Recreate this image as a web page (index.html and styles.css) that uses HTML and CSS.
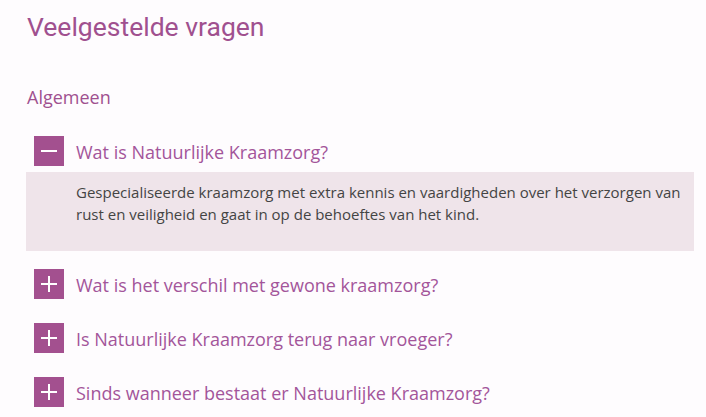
FILE: index.html
```html
<!DOCTYPE html>
<html lang="nl">
<head>
    <meta charset="UTF-8">
    <meta name="viewport" content="width=device-width, initial-scale=1.0">
    <title>Veelgestelde vragen</title>
    <link rel="stylesheet" href="styles.css">
</head>
<body>

<h1 class="page-title">Veelgestelde vragen</h1>

<h3 class="faq-group">Algemeen</h3>

<div class="faq">
    <div class="faq-item open">
        <div class="faq-question">
            <span class="toggle"><span class="bar bar-h"></span></span>
            <span class="question-text">Wat is Natuurlijke Kraamzorg?</span>
        </div>
        <div class="faq-answer">
            <p>Gespecialiseerde kraamzorg met extra kennis en vaardigheden over het verzorgen van rust en veiligheid en gaat in op de behoeftes van het kind.</p>
        </div>
    </div>

    <div class="faq-item">
        <div class="faq-question">
            <span class="toggle"><span class="bar bar-h"></span><span class="bar bar-v"></span></span>
            <span class="question-text">Wat is het verschil met gewone kraamzorg?</span>
        </div>
    </div>

    <div class="faq-item">
        <div class="faq-question">
            <span class="toggle"><span class="bar bar-h"></span><span class="bar bar-v"></span></span>
            <span class="question-text">Is Natuurlijke Kraamzorg terug naar vroeger?</span>
        </div>
    </div>

    <div class="faq-item">
        <div class="faq-question">
            <span class="toggle"><span class="bar bar-h"></span><span class="bar bar-v"></span></span>
            <span class="question-text">Sinds wanneer bestaat er Natuurlijke Kraamzorg?</span>
        </div>
    </div>
</div>

</body>
</html>
```

FILE: styles.css
```css
body { margin: 0; padding: 0 12px 0 26px; background: #fefcfe; font-family: "Open Sans", sans-serif; color: #a0508f; }
.page-title { margin: 0; padding-top: 11px; padding-left: 1px; font-family: Roboto, sans-serif; font-weight: 400; font-size: 26.5px; line-height: 32px; color: #a0508f; }
.faq-group { margin: 42px 0 0 1px; font-weight: 400; font-size: 18px; line-height: 24px; }
.faq { margin-top: 27px; }
.faq-item { margin-bottom: 24px; }
.faq-item.open { margin-bottom: 18px; }
.faq-question { display: flex; align-items: center; gap: 12px; padding-left: 8px; height: 30px; cursor: pointer; }
.toggle { position: relative; width: 30px; height: 30px; flex: none; background: #a3508f; }
.bar { position: absolute; background: #fff; }
.bar-h { left: 7px; top: 14px; width: 16px; height: 2px; }
.bar-v { left: 14px; top: 7px; width: 2px; height: 16px; }
.question-text { padding-top: 2px; font-size: 18px; line-height: 24px; color: #a3559a; }
.faq-answer { margin-top: 6px; background: #efe4ea; padding: 9px 6px 26px 50px; }
.faq-answer p { margin: 0; font-size: 15px; line-height: 22px; color: #444; }
```
